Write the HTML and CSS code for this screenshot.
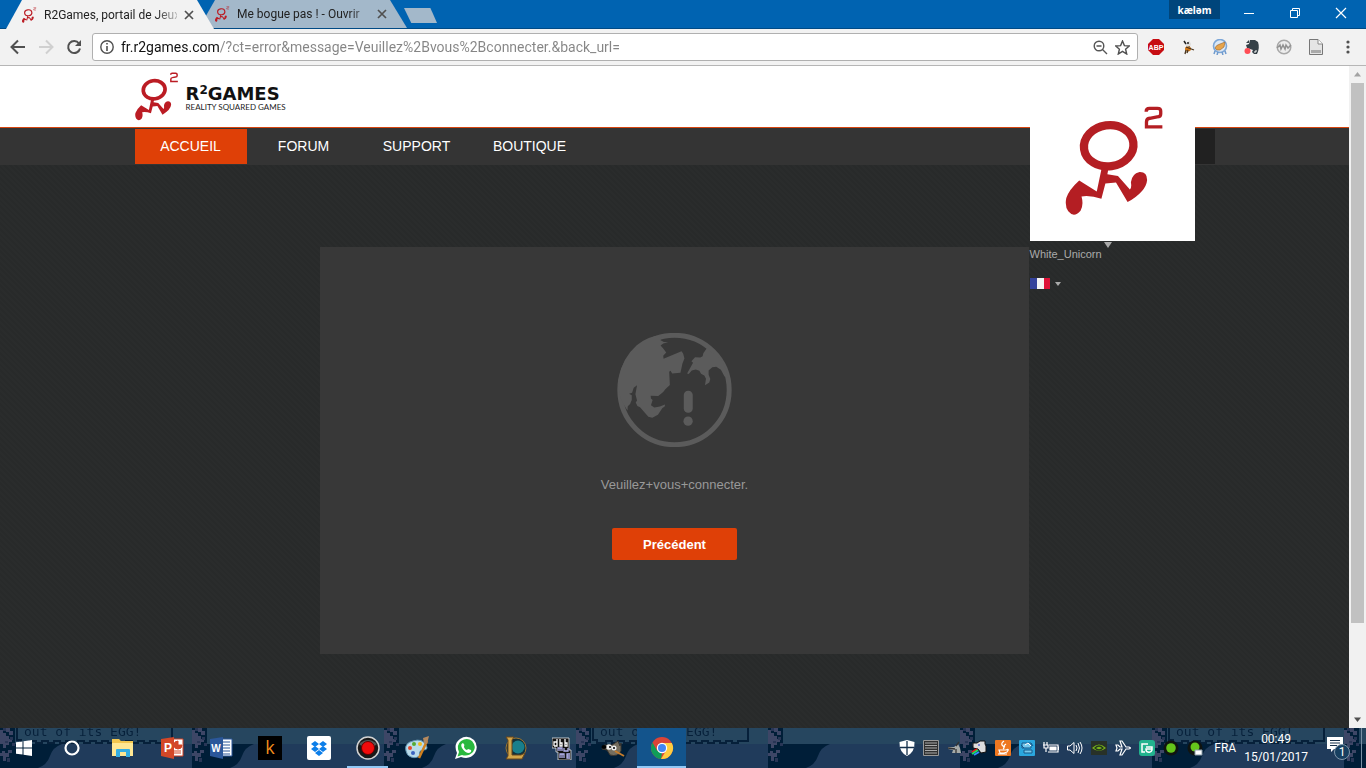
FILE: index.html
```html
<!DOCTYPE html>
<html lang="fr">
<head>
<meta charset="utf-8">
<title>R2Games, portail de Jeux</title>
<link rel="stylesheet" href="styles.css">
</head>
<body>
<svg class="defs" aria-hidden="true">
  <symbol id="runner" viewBox="134 32 294 332">
    <ellipse cx="265" cy="152" rx="75" ry="62" fill="none" stroke="currentColor" stroke-width="25" transform="rotate(-8 265 152)"/>
    <path fill="currentColor" d="M244 218L264 222 261 238 293 243 329 284Q335 279 332 262 335 236 358 231 381 230 381 255 378 290 322 322L287 263 255 266 243 312Q210 301 183 305 190 330 180 348 160 371 143 350 132 335 137 310 145 285 176 257L229 290Z"/>
    <path fill="none" stroke="currentColor" stroke-width="10" d="M378 49Q378 39 388 39H412Q422 39 422 47V56Q422 65 411 65L389 69Q379 70 379 80V95H427"/>
  </symbol>
  <symbol id="cross" viewBox="0 0 10 10"><path d="M1 1L9 9M9 1L1 9" fill="none" stroke="currentColor" stroke-width="1.7"/></symbol>
</svg>

<header class="titlebar">
  <div class="tabs">
    <div class="tab tab-active">
      <svg class="favicon"><use href="#runner"/></svg>
      <span class="tab-title">R2Games, portail de Jeux</span>
      <button class="tab-close" aria-label="Fermer l'onglet"><svg><use href="#cross"/></svg></button>
    </div>
    <div class="tab">
      <svg class="favicon"><use href="#runner"/></svg>
      <span class="tab-title">Me bogue pas ! - Ouvrir</span>
      <button class="tab-close" aria-label="Fermer l'onglet"><svg><use href="#cross"/></svg></button>
    </div>
    <button class="new-tab" aria-label="Nouvel onglet"></button>
  </div>
  <div class="window-controls">
    <button class="profile">kæləm</button>
    <button class="win-btn" aria-label="Réduire"><svg width="12" height="12"><path d="M1 6.500H11" stroke="#fff"/></svg></button>
    <button class="win-btn" aria-label="Restaurer"><svg width="12" height="12" fill="none" stroke="#fff"><path d="M1.500 3.500H8.500V10.500H1.500ZM3.500 3V1.500H10.500V8.500H9"/></svg></button>
    <button class="win-btn" aria-label="Fermer"><svg width="12" height="12"><path d="M1 1L11 11M11 1L1 11" stroke="#fff" stroke-width="1.200"/></svg></button>
  </div>
</header>

<div class="toolbar">
  <button class="tool" aria-label="Retour"><svg width="16" height="16" fill="none" stroke="#505050" stroke-width="2"><path d="M15 8H2M8 1.500L1.500 8 8 14.500"/></svg></button>
  <button class="tool" aria-label="Avancer"><svg width="16" height="16" fill="none" stroke="#d0d0d0" stroke-width="2"><path d="M1 8H14M8 1.500L14.500 8 8 14.500"/></svg></button>
  <button class="tool" aria-label="Actualiser"><svg width="16" height="16"><path d="M13 4.500A6 6 0 1 0 14 9.500" fill="none" stroke="#505050" stroke-width="2"/><path d="M15 1V7H9Z" fill="#505050"/></svg></button>
  <div class="omnibox">
    <svg width="14" height="14"><circle cx="7" cy="7" r="6.200" fill="none" stroke="#505050" stroke-width="1.400"/><path d="M7 3V4.600M7 6V11" stroke="#505050" stroke-width="1.600"/></svg>
    <input class="url" aria-label="Adresse" value="fr.r2games.com/?ct=error&amp;message=Veuillez%2Bvous%2Bconnecter.&amp;back_url=">
    <svg width="15" height="15" fill="none" stroke="#555" stroke-width="1.400"><circle cx="6" cy="6" r="4.800"/><path d="M9.500 9.500L14 14M3.500 6H8.500"/></svg>
    <svg width="15" height="15" fill="none" stroke="#505050" stroke-width="1.400"><path d="M7.500 1L9.400 5.600 14.300 6 10.600 9.200 11.700 14 7.500 11.400 3.300 14 4.400 9.200 .7 6 5.600 5.600Z"/></svg>
  </div>
  <div class="extensions">
    <button aria-label="Adblock Plus"><svg width="16" height="16"><path d="M5 0H11L16 5V11L11 16H5L0 11V5Z" fill="#c70d12"/><text x="8" y="11" class="abp">ABP</text></svg></button>
    <button aria-label="Extension"><svg width="16" height="16"><path d="M3 2L7 5 9 1 11 5 10 8 7 8Z" fill="#ddd"/><path d="M4 2L6 5M8 3V5M10 8L7 9" stroke="#222" stroke-width="1.500"/><ellipse cx="8" cy="10" rx="3" ry="2.400" fill="#d47917"/><path d="M6 8L14 11M6 11L5 15M8 11L7 14" stroke="#49351f" stroke-width="1.300"/></svg></button>
    <button aria-label="Extension"><svg width="16" height="16"><circle cx="8" cy="7" r="6.500" fill="#dce8f5" stroke="#7da7d8" stroke-width="1.600"/><path d="M3 9Q4 6 8 5L13 3 12 8 8 11 5 11Z" fill="#e7a44b" stroke="#936333" stroke-width=".6"/><path d="M3 12L2 15M6 13L5 16M10 13L11 16M13 12L14 15" stroke="#6f9acd" stroke-width="1.500"/></svg></button>
    <button aria-label="Evernote"><svg width="16" height="16"><path d="M6 1H11L14 3Q16 9 13 15H10L8 13 9 11 6 10 3 9 2 6 5 5Z" fill="#354047"/><path d="M2 4L5 1V4Z" fill="#354047"/><path d="M10 13H12V11" stroke="#fff" fill="none"/><circle cx="3.500" cy="12" r="3" fill="#ff4d55"/></svg></button>
    <button aria-label="Extension"><svg width="16" height="16"><circle cx="8" cy="8" r="6.800" fill="#ededed" stroke="#a8a8a8" stroke-width="1.500"/><path d="M1 9L4 6 5 10 7 6 9 10 10 6 12 9 15 6" fill="none" stroke="#929292" stroke-width="1.500"/></svg></button>
    <button aria-label="Document"><svg width="16" height="16"><path d="M1.500 .5H10L14.500 5V15.500H1.500Z" fill="#e5e5e5" stroke="#777"/><path d="M10 .5V5H14.500" fill="#fff" stroke="#888"/><path d="M3 11H13V14H3Z" fill="#aaa"/></svg></button>
    <button aria-label="Menu"><svg width="16" height="16" fill="#505050"><circle cx="8" cy="3" r="1.600"/><circle cx="8" cy="8" r="1.600"/><circle cx="8" cy="13" r="1.600"/></svg></button>
  </div>
</div>

<div class="viewport">
  <div class="site">
    <div class="masthead">
      <a class="brand wrap" href="#">
        <svg class="brand-mark"><use href="#runner"/></svg>
        <span class="brand-text"><strong>R<sup>2</sup>GAMES</strong><small>REALITY SQUARED GAMES</small></span>
      </a>
    </div>
    <div class="navbar">
      <div class="nav-row wrap">
        <nav class="menu">
          <a class="current" href="#">ACCUEIL</a>
          <a href="#">FORUM</a>
          <a href="#">SUPPORT</a>
          <a href="#">BOUTIQUE</a>
        </nav>
        <div class="account">
          <div class="account-card">
            <div class="avatar"><svg><use href="#runner"/></svg></div>
            <a class="user" href="#"><span>White_Unicorn</span><svg width="8" height="6"><path d="M0 0H8L4 6Z" fill="#aaa"/></svg></a>
            <button class="lang" aria-label="Français"><svg width="20" height="11"><path d="M0 0H7V11H0Z" fill="#35439b"/><path d="M7 0H14V11H7Z" fill="#f4f4f4"/><path d="M14 0H20V11H14Z" fill="#df1238"/></svg><svg width="6" height="4"><path d="M0 0H6L3 4Z" fill="#aaa"/></svg></button>
          </div>
        </div>
      </div>
    </div>
    <main class="content">
      <section class="panel">
        <svg class="globe" viewBox="51 38 346 344" fill="#5b5b5b">
          <circle cx="224" cy="210" r="165" fill="none" stroke="#5b5b5b" stroke-width="15"/>
          <path d="M82 272Q50 230 56 175 65 115 110 75 145 47 185 45L182 60 192 65 205 66 190 70 182 76 190 85 199 97 190 107 191 116 245 93 250 100 254 115 248 130 242 158 217 160 212 152 208 155 210 195 197 207 190 216 175 228 152 227 153 236 158 240 153 256 163 263 180 260 195 254 195 259 187 265 174 285 157 294 145 291 120 262 112 258 107 248 111 242 106 223 111 196 101 203 96 218 87 221 95 226 95 240 90 252 83 259Z"/>
          <path d="M322 83L311 99 309 108 302 112 286 111 275 123 280 128 262 160 267 162 276 151 288 148 299 152 304 161 314 166 319 176 316 196 329 187 332 177 327 164 327 151 338 141 350 140 364 149 375 169 389 176 368 122Z"/>
          <rect x="252" y="212" width="27" height="67" rx="13"/><circle cx="265" cy="304" r="14"/>
        </svg>
        <p class="message">Veuillez+vous+connecter.</p>
        <button class="back">Précédent</button>
      </section>
    </main>
  </div>
  <div class="scrollbar">
    <svg width="17" height="17"><path d="M5 10.500H12L8.500 6Z" fill="#a3a3a3"/></svg>
    <div class="track"><div class="thumb"></div></div>
    <svg width="17" height="17"><path d="M5 6.500H12L8.500 11Z" fill="#505050"/></svg>
  </div>
</div>

<footer class="taskbar">
  <svg class="wallpaper" aria-hidden="true">
    <defs>
      <pattern id="tile" width="192" height="40" patternUnits="userSpaceOnUse">
        <path d="M0 0H192V40H0Z" fill="#203b5b"/><path d="M15 0H192V16H15Z" fill="#26465f"/>
        <path d="M0 0H15V16H62Q53 19 50 28 47 37 38 40H0Z" fill="#001e38"/>
        <path d="M0 2H3V5H6V8H9V11H12V14H9V17H6V20H3V16H0ZM6 0H10V3H13V7H9V4H6ZM2 23H5V25H8V22H12V25H9V29H6V33H3V28H0V25H2Z" fill="#3d4666"/>
        <path d="M3 0H6V3H3ZM10 9H13V12H10ZM5 13H8V15H5ZM12 15H15V18H12ZM7 30H10V34H7Z" fill="#283656"/>
      </pattern>
      <pattern id="bubble" width="576" height="40" patternUnits="userSpaceOnUse" x="16">
        <path d="M1 0V12H5V15H14V13H20V15H26V13H32V15H38V13H44V15H50V13H56V15H62V13H68V15H74V13H80V15H86V13H92V15H98V13H104V15H110V13H116V15H122V13H128V15H134V13H140V15H146V13H156V0" fill="none" stroke="#06203a" stroke-width="2"/>
        <text x="8" y="8" class="bubble-text">out of its EGG!</text>
      </pattern>
    </defs>
    <rect width="100%" height="40" fill="url(#tile)"/><rect width="100%" height="40" fill="url(#bubble)"/>
  </svg>
  <div class="apps">
    <button class="sys" aria-label="Démarrer"><svg width="16" height="16" fill="#fff"><path d="M0 2.300L6.500 1.400V7.500H0ZM7.500 1.200L16 0V7.500H7.500ZM0 8.500H6.500V14.600L0 13.700ZM7.500 8.500H16V16L7.500 14.800Z"/></svg></button>
    <button class="sys" aria-label="Cortana"><svg width="16" height="16"><circle cx="8" cy="8" r="6.500" fill="none" stroke="#fff" stroke-width="2.200"/></svg></button>
    <button class="first" aria-label="Explorateur"><svg width="24" height="24"><path d="M1 3H8L10 5H22V20H1Z" fill="#f2c64f"/><path d="M1 7H22V20H1Z" fill="#ffe793"/><path d="M5 21V14Q5 13 6 13H18Q19 13 19 14V21H15V16H9V21Z" fill="#35aee3"/></svg></button>
    <button aria-label="PowerPoint"><svg width="24" height="24"><path d="M12 3H23V20H12Z" fill="#fff" stroke="#cf4024"/><path d="M18 5A4 4 0 1 0 22 9H18ZM14 15H21M14 17H21" fill="#d34727" stroke="#d34727"/><path d="M1 3L14 1V23L1 20Z" fill="#d34727"/><text x="8" y="16" class="office">P</text></svg></button>
    <button aria-label="Word"><svg width="24" height="24"><path d="M12 3H23V20H12Z" fill="#fff" stroke="#2b579a"/><path d="M14 6H21M14 9H21M14 12H21M14 15H21M14 18H21" stroke="#2b579a"/><path d="M1 3L14 1V23L1 20Z" fill="#2b579a"/><text x="7" y="16" class="office word">W</text></svg></button>
    <button aria-label="k"><svg width="24" height="24"><path d="M0 0H24V24H0Z" fill="#000"/><text x="12" y="18" class="k">k</text></svg></button>
    <button aria-label="Dropbox"><svg width="24" height="24"><rect width="24" height="24" rx="2" fill="#fff"/><path d="M8 5L12 8 8 11 4 8ZM16 5L20 8 16 11 12 8ZM8 10L12 13 8 16 4 13ZM16 10L20 13 16 16 12 13ZM12 14L16 17 12 20 8 17Z" fill="#0c7ee9"/></svg></button>
    <button class="running" aria-label="Enregistreur"><svg width="24" height="24"><circle cx="12" cy="12" r="11" fill="#191919" stroke="#d3d3d3" stroke-width="1.500"/><path d="M3 8Q12 0 21 8L17 11H7Z" fill="#555"/><circle cx="12" cy="12" r="6.500" fill="#f20b0b" stroke="#680000"/></svg></button>
    <button aria-label="Peinture"><svg width="24" height="24"><path d="M1 15Q-1 7 8 5 17 2 21 9 24 14 18 14 13 15 15 19 12 23 6 21 2 20 1 15Z" fill="#b9dbea" stroke="#6295b2"/><circle cx="5" cy="12" r="2" fill="#e4492c"/><circle cx="9" cy="8" r="2" fill="#57aa33"/><circle cx="15" cy="8" r="2" fill="#f0ba22"/><circle cx="8" cy="17" r="2" fill="#3b64bf"/><path d="M22 5L14 22" stroke="#cf801e" stroke-width="2.500"/><path d="M18 2L24 0 22 8 19 7Z" fill="#b5895e"/></svg></button>
    <button aria-label="WhatsApp"><svg width="24" height="24"><path d="M1 23L3 17Q-1 8 6 3 13-2 20 4 25 10 21 17 16 24 7 21Z" fill="#fff"/><path d="M3.500 20.500L5 16Q2 9 7 5 13 1 18 5 23 11 19 16 14 21 8 19Z" fill="#29b83e"/><path d="M9 7Q6 8 8 12 11 17 15 17 18 16 17 14L14 13 13 14Q10 13 10 10L10.500 9Z" fill="#fff"/></svg></button>
    <button aria-label="League of Legends"><svg width="24" height="24"><circle cx="13" cy="12" r="10" fill="#12313b" stroke="#9f7730"/><circle cx="15" cy="11" r="6.500" fill="#197f8b"/><path d="M3 1H11L9 4V19H18L22 17 19 23H3L5 20V4Z" fill="#d2a64a" stroke="#69471c"/></svg></button>
    <button aria-label="Desmume"><svg width="24" height="24"><path d="M0 2H17V14H19V24H6V16H4V12H0Z" fill="#111" stroke="#fff" stroke-width=".7"/><path d="M2 10V6H5V10H2M5 3V10M8 3V10H10V7H8M13 3V10H15V7H13" fill="none" stroke="#fff" stroke-width="1.300"/><path d="M6 15V12H10V15M8 12V15M12 12V15H16V12M8 22V18H12V22M10 18V22M18 18H15V22H18M15 20H18" fill="none" stroke="#b4b4ef" stroke-width="1.300"/></svg></button>
    <button aria-label="GIMP"><svg width="24" height="24"><path d="M3 9L11 9 17 5 19 10 20 7 20 15Q17 21 9 19L6 14 1 13Z" fill="#756e5f" stroke="#39342e"/><circle cx="8" cy="11" r="2.800" fill="#eee"/><circle cx="13" cy="12" r="2.500" fill="#eee"/><circle cx="9" cy="11" r="1"/><circle cx="13" cy="12" r="1"/><ellipse cx="3" cy="11" rx="2.500" ry="2"/><path d="M14 15L23 20" stroke="#c67c2c" stroke-width="2"/></svg></button>
    <button class="running active" aria-label="Chrome"><svg width="24" height="24"><circle cx="12" cy="12" r="11" fill="#db4437"/><path d="M2.500 6.500L7 14.500 12 17 11 23A11 11 0 0 1 2.500 6.500Z" fill="#0f9d58"/><path d="M12 7H21.800A11 11 0 0 1 11 23L16.500 14Z" fill="#ffcd40"/><circle cx="12" cy="12" r="5.200" fill="#fff"/><circle cx="12" cy="12" r="4" fill="#4285f4"/></svg></button>
  </div>
  <div class="tray">
    <svg width="16" height="16"><path d="M8 0L15.500 2Q16 12 8 16 0 12 .5 2Z" fill="#fff"/><path d="M8 1V15M1 7.500H15" stroke="#15304b" stroke-width="1.300"/></svg>
    <svg width="16" height="16"><path d="M.5 .5H15.500V15.500H.5Z" fill="#303030" stroke="#999"/><path d="M2 3H14M2 5.500H14M2 8H14M2 10.500H14M2 13H14" stroke="#aaa"/></svg>
    <svg width="16" height="16"><path d="M1 7L7 7 11 4 13 8 14 13H5L6 10 1 9Z" fill="#a5aaa8"/><path d="M1 8L8 9M9 9V13M12 2L9 6" stroke="#333" stroke-width="1.300"/></svg>
    <svg width="16" height="16"><path d="M2 3H6L9 1H14V4L15 6V12L10 13 7 9 2 8Z" fill="#ddd" stroke="#111"/><path d="M7 5H9" stroke="#23c"/><path d="M1 12L6 9" stroke="#f01818" stroke-width="2"/><path d="M1 14L7 10" stroke="#20dd60" stroke-width="2"/><path d="M3 15L8 12" stroke="#338cff" stroke-width="2"/></svg>
    <svg width="16" height="16"><rect width="16" height="16" rx="1" fill="#ee7821"/><path d="M9 1Q5 4 8 6 10 8 8 9M11 4Q8 6 10 7M4 10H11Q15 8 12 12L9 13H5ZM3 14H12" fill="none" stroke="#fff" stroke-width="1.200"/></svg>
    <svg width="16" height="16"><rect width="16" height="16" rx="1" fill="#2ba7de"/><path d="M3 3H12V8H3ZM5 10H13V13H5ZM2 5L5 8M12 3L14 6" fill="#75c9ec" stroke="#17588a"/><path d="M6 5L9 3 12 6" stroke="#fff" fill="none"/></svg>
    <svg width="16" height="16" fill="none" stroke="#fff" stroke-width="1.200"><path d="M1 2V5M4 2V5M0 5H5V8H1V5M3 8V12M6 5H15V12H5M15 7H16V10"/><path d="M7 7H13V10H7Z" fill="#fff"/></svg>
    <svg width="16" height="16" fill="none" stroke="#fff"><path d="M.5 6H3L7 2.500V13.500L3 10H.5ZM9 5Q11 8 9 11M11 3Q14 8 11 13M13 2Q17 8 13 14"/></svg>
    <svg width="16" height="16"><path d="M0 1H16V15H0Z" fill="#283128"/><path d="M1 8Q8 1 15 8 8 14 1 8Z" fill="#78b51a"/><path d="M4 8Q8 4 12 8 8 12 4 8Z" fill="none" stroke="#23351d" stroke-width="1.200"/></svg>
    <svg width="16" height="16"><path d="M1 5L3 5 5 7H7L5 1H7L11 7H14L15.500 8 14 9H11L7 15H5L7 9H5L3 11H1L2 8Z" fill="none" stroke="#fff" stroke-width="1.200"/></svg>
    <svg width="16" height="16"><rect width="16" height="16" rx="3" fill="#22b38e"/><path d="M9 4H3V12H6M7 7H13V10Q12 13 9 12 7 12 7 9H13" fill="none" stroke="#fff" stroke-width="1.500"/></svg>
    <svg width="16" height="16"><circle cx="8" cy="8" r="7.500" fill="#101410"/><circle cx="8" cy="8" r="4.800" fill="#65c51b"/></svg>
    <svg width="16" height="16"><circle cx="8" cy="8" r="7.500" fill="#101410"/><circle cx="8" cy="7" r="4.500" fill="#65c51b"/><path d="M8 10H15V15H8Z" fill="#fff" stroke="#8b9ca9"/></svg>
    <span class="locale">FRA</span>
    <time class="clock"><span>00:49</span><span>15/01/2017</span></time>
    <button class="notify" aria-label="Notifications"><svg width="24" height="24"><path d="M1 1H17V13H8L5 16V13H1Z" fill="#fff"/><path d="M4 4.500H14M4 7H14M4 9.500H11" stroke="#17304a"/><circle cx="16" cy="16" r="7.500" fill="#173f60" stroke="#8096aa"/><text x="16" y="20" class="badge">1</text></svg></button>
  </div>
</footer>
</body>
</html>
```
FILE: styles.css
```css
* { box-sizing: border-box; }
html, body { height: 100%; }
body {
  margin: 0;
  display: flex;
  flex-direction: column;
  overflow: hidden;
  font-family: "Liberation Sans", Arial, sans-serif;
}
button { border: 0; padding: 0; background: none; font: inherit; color: inherit; }
a { color: inherit; text-decoration: none; }
svg { display: block; flex: none; }
.defs { position: absolute; width: 0; height: 0; }

/* Window frame */
.titlebar {
  height: 29px;
  flex: none;
  display: flex;
  justify-content: space-between;
  background: #0063b1;
  border-bottom: 1px solid #004a85;
  font-family: Roboto, sans-serif;
  font-size: 12px;
}
.tabs { display: flex; align-items: flex-end; padding-left: 6px; }
.tab {
  width: 208px;
  height: 28px;
  margin-right: -15px;
  padding: 0 20px 0 15px;
  display: flex;
  align-items: center;
  gap: 7px;
  background: #a3b8ca;
  color: #222;
  clip-path: polygon(0 100%, 16px 0, 191px 0, 100% 100%);
}
.tab-active { background: #f2f2f2; z-index: 1; height: 29px; margin-bottom: -1px; }
.favicon { width: 16px; height: 16px; color: #bb1c24; }
.tab-title {
  flex: 1;
  min-width: 0;
  white-space: nowrap;
  mask-image: linear-gradient(90deg, #000 84%, transparent 105%);
}
.tab-close { width: 10px; height: 10px; color: #505050; }
.tab-close svg { width: 10px; height: 10px; }
.new-tab {
  width: 33px;
  height: 15px;
  margin: 0 0 5px 12px;
  background: #a3b8ca;
  clip-path: polygon(0 0, 80% 0, 100% 100%, 22% 100%);
}
.window-controls { display: flex; align-items: flex-start; padding-right: 2px; }
.profile {
  width: 51px;
  height: 19px;
  margin-right: 6px;
  background: #00457b;
  color: #fff;
  font: bold 10px/16px "Noto Sans", sans-serif;
}
.win-btn { width: 46px; height: 26px; display: grid; place-items: center; }

/* Browser toolbar */
.toolbar {
  height: 37px;
  flex: none;
  display: flex;
  align-items: center;
  padding: 0 10px;
  background: #f2f2f2;
  border-bottom: 1px solid #b6b6b6;
}
.tool { margin-right: 12px; }
.omnibox {
  flex: 1;
  height: 28px;
  display: flex;
  align-items: center;
  gap: 7px;
  margin-left: -2px;
  padding: 0 7px;
  background: #fff;
  border: 1px solid #b0b0b0;
  border-radius: 3px;
}
.url {
  flex: 1;
  min-width: 0;
  border: 0;
  padding: 0;
  background: linear-gradient(90deg, #111 98px, #858585 98px);
  background-clip: text;
  color: transparent;
  font: 14px Roboto, sans-serif;
}
.extensions { display: flex; gap: 16px; margin-left: 10px; }
.abp { font: bold 7px "Liberation Sans", sans-serif; fill: #fff; text-anchor: middle; }

/* Page area */
.viewport { flex: 1; min-height: 0; display: flex; }
.site {
  flex: 1;
  min-width: 0;
  background: repeating-linear-gradient(45deg, #282a2a 0 2px, #2a2c2c 2px 4px);
}
.wrap { width: 1080px; max-width: 100%; margin: 0 auto; }
.masthead { height: 61px; background: #fff; }
.brand { display: flex; padding-top: 6px; gap: 8px; color: #bb1c24; }
.brand-mark { width: 43px; height: 49px; }
.brand-text { display: flex; flex-direction: column; padding-top: 13px; }
.brand-text strong { font: bold 18px/18px "DejaVu Sans", sans-serif; color: #111; }
.brand-text sup { font-size: 12px; line-height: 8px; vertical-align: 6px; }
.brand-text small { font: 8px/8px Lato, sans-serif; color: #222; }
.navbar { border-top: 1px solid #d7450e; background: #343434; padding: 1px 0; }
.nav-row { display: flex; justify-content: space-between; }
.menu { display: flex; gap: 1px; }
.menu a { width: 112px; color: #fff; font-size: 14px; line-height: 35px; text-align: center; }
.menu .current { background: #df4007; }
.account { position: relative; width: 185px; background: #212121; }
.account-card {
  position: absolute;
  top: -53px;
  left: 0;
  width: 165px;
  color: #aaa;
  font-size: 11px;
}
.avatar { height: 165px; background: #fff; padding: 30px 32px 0 35px; }
.avatar svg { width: 98px; height: 110px; color: #b41e23; }
.user { display: flex; gap: 2px; padding-top: 1px; line-height: 24px; }
.lang { display: flex; align-items: center; gap: 5px; margin-top: 12px; }
.content { padding: 82px 0; }
.panel {
  width: 709px;
  max-width: 100%;
  margin: 0 auto;
  padding: 86px 20px 94px;
  display: flex;
  flex-direction: column;
  align-items: center;
  background: #383838;
}
.globe { width: 115px; height: 114px; }
.message { margin: 30px 0 36px; color: #999; font-size: 13px; line-height: 15px; }
.back {
  width: 125px;
  height: 32px;
  border-radius: 2px;
  background: #df4007;
  color: #fff;
  font-size: 13px;
  font-weight: bold;
}
.scrollbar { width: 17px; display: flex; flex-direction: column; background: #f1f1f1; }
.track { flex: 1; padding: 0 2px; }
.thumb { height: 86%; background: #c1c1c1; }

/* Desktop taskbar */
.taskbar {
  position: relative;
  height: 40px;
  flex: none;
  display: flex;
  justify-content: space-between;
  background: #203b5b;
  color: #fff;
  font: 12px/18px Roboto, sans-serif;
}
.wallpaper { position: absolute; inset: 0; width: 100%; height: 40px; }
.bubble-text { font: 13px "DejaVu Sans Mono", monospace; fill: #06203a; }
.apps, .tray { position: relative; display: flex; align-items: center; }
.apps button { width: 49px; height: 40px; display: grid; place-items: center; }
.apps .sys { width: 48px; }
.apps .first { margin-left: 2px; }
.apps .running { width: 41px; margin: 0 4px; border-bottom: 2px solid #91c8f5; padding-top: 2px; }
.apps .active { width: 49px; margin: 0; background-color: #13548c; }
.office { font: bold 12px "Liberation Sans", sans-serif; fill: #fff; text-anchor: middle; }
.word { font-size: 10px; }
.k { font: 18px "Open Sans", sans-serif; fill: #f28c1b; text-anchor: middle; }
.tray { gap: 8px; padding-right: 11px; border-right: 1px solid #7890a4; margin-right: 4px; }
.locale { margin-left: 3px; }
.clock { display: flex; flex-direction: column; align-items: center; margin-right: 10px; }
.badge { font: 12px Roboto, sans-serif; fill: #fff; text-anchor: middle; }
```
